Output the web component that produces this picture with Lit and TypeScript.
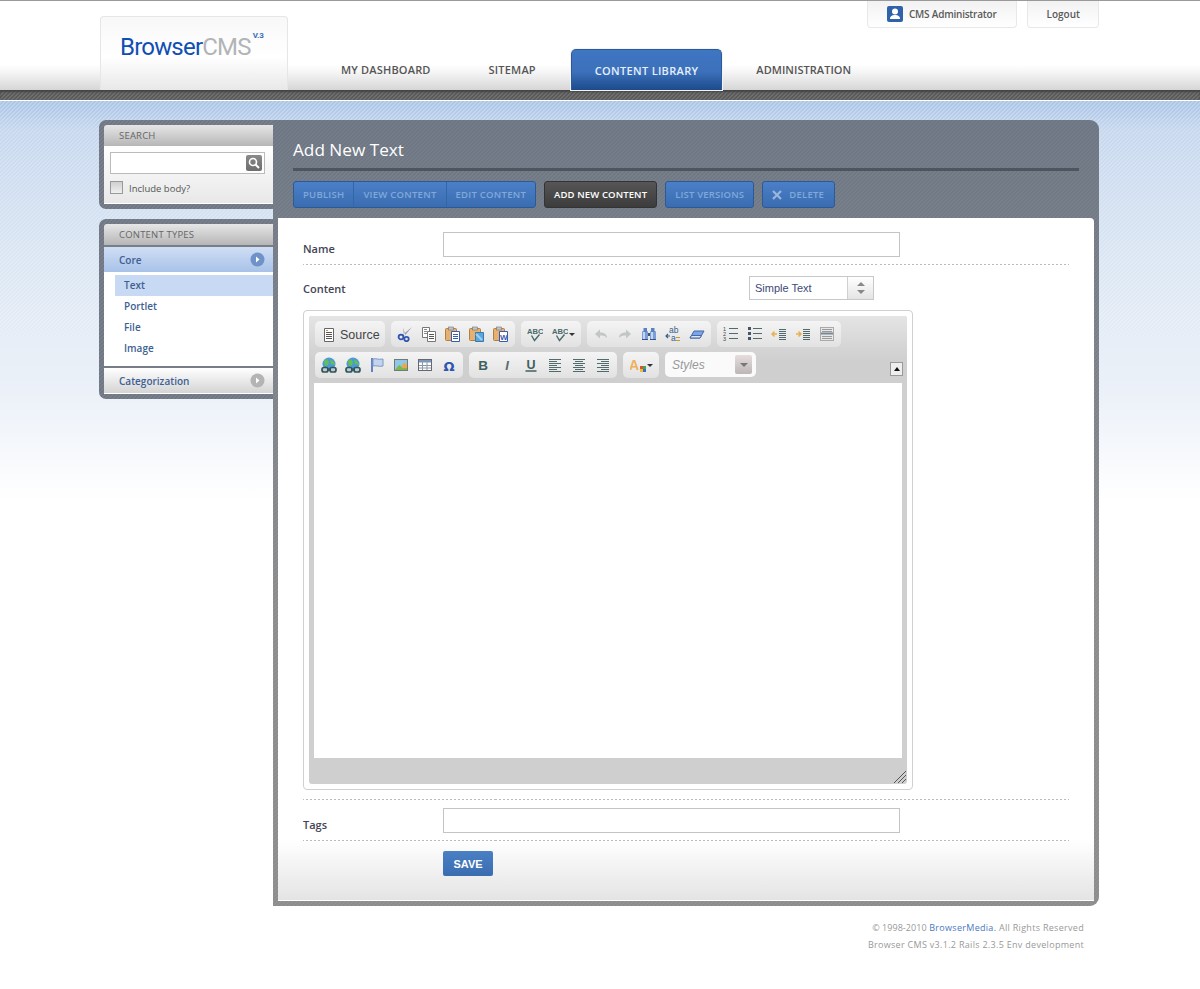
import { LitElement, css, html, svg, nothing } from 'lit'
import { customElement } from 'lit/decorators.js'

const i = (body: unknown) => html`<svg class="ico" viewBox="0 0 16 16" width="16" height="16">${body}</svg>`

const lines = (x1: number, x2: number, ys: number[], c = '#4f6b6b') =>
  ys.map((y) => svg`<path d="M${x1} ${y + 0.5}H${x2}" stroke=${c} fill="none" />`)

const clip = svg`<rect x="0.500" y="2.500" width="11" height="12" rx="1" fill="#e6b070" stroke="#b08040" /><rect x="3.500" y="1" width="5" height="3" fill="#c4c4c4" stroke="#777" stroke-width=".6" />`

const globe = svg`<circle cx="8" cy="7" r="6.500" fill="#4a9ad8" /><path d="M3 4l3-2 2 3-1 3-3 1zM9 2l4 3 1 3-4-1z" fill="#66c050" /><rect x="1" y="10.500" width="6" height="4.500" rx="2" fill="#bcd" stroke="#355" stroke-width="1.700" /><rect x="9" y="10.500" width="6" height="4.500" rx="2" fill="#bcd" stroke="#355" stroke-width="1.700" /><path d="M6 12.700h4" stroke="#355" stroke-width="1.800" />`

const spell = svg`<text x="0" y="8" font-family="Liberation Sans" font-size="7.600" font-weight="700" fill="#486a6a">ABC</text><path d="M4.500 9.500l3 5 5-6" fill="none" stroke="#486a6a" stroke-width="1.400" />`

const icons = {
  source: i(svg`<path d="M3.500 1.500h9v13h-9z" fill="#fff" stroke="#666" /><path d="M5 3.500h2" stroke="#e08a30" />${lines(5, 11, [5, 7, 9, 11], '#555')}`),
  cut: i(svg`<path d="M15 1L6 8.500l1.500 1.500zM6 1.500l2.500 8-1.500.5z" fill="#9aa0a8" /><circle cx="4" cy="11" r="2.400" fill="none" stroke="#2f55b0" stroke-width="1.800" /><circle cx="9.500" cy="13" r="2.200" fill="none" stroke="#2f55b0" stroke-width="1.800" />`),
  copy: i(svg`<path d="M1.500 1.500h7v10h-7z" fill="#fff" stroke="#777" /><path d="M6.500 5.500h8v10h-8z" fill="#fff" stroke="#777" />${lines(3, 6, [3, 5, 7], '#888')}${lines(8, 13, [8, 10, 12], '#555')}`),
  paste: i(svg`${clip}<path d="M6.500 5.500h8v10h-8z" fill="#fff" stroke="#3a5cb0" />${lines(8, 13, [8, 10, 12], '#3a5cb0')}`),
  pasteText: i(svg`${clip}<path d="M6.500 6.500h8v9h-8z" fill="#58a8e0" stroke="#3a78b0" /><path d="M7 8l6 6" stroke="#9fd0f0" stroke-width="2" />`),
  pasteWord: i(svg`${clip}<path d="M6.500 5.500h8v10h-8z" fill="#fff" stroke="#3a5cb0" /><text x="7" y="14" font-family="Liberation Sans" font-size="8" font-weight="700" fill="#3a5cb0">W</text>`),
  spell: i(spell),
  undo: i(svg`<path d="M2 8l5-4.500v3c4 0 7 1.500 7 5.500-1.500-2-4-2.500-7-2.500v3z" fill="#c2c6c6" />`),
  redo: i(svg`<path d="M14 8L9 3.500v3c-4 0-7 1.500-7 5.500 1.500-2 4-2.500 7-2.500v3z" fill="#c2c6c6" />`),
  find: i(svg`<rect x="1" y="5" width="6" height="9" rx="1" fill="#7c9ed8" /><rect x="9" y="5" width="6" height="9" rx="1" fill="#7c9ed8" /><rect x="2.500" y="2" width="3.500" height="4" fill="#5a80c0" /><rect x="10" y="2" width="3.500" height="4" fill="#5a80c0" /><path d="M7 7h2v3H7z" fill="#456" /><path d="M3 6v7M11 6v7" stroke="#e4ecfa" stroke-width="1.400" /><path d="M1 13.500h6M9 13.500h6" stroke="#34558e" />`),
  replace: i(svg`<text x="4" y="7" font-family="Liberation Sans" font-size="8.500" fill="#35608a">ab</text><text x="6" y="15" font-family="Liberation Sans" font-size="8.500" fill="#35608a">a</text><path d="M11 14.500h4M11 11.500h4" stroke="#c89a30" /><path d="M1 10h4M3 8l-2 2 2 2" fill="none" stroke="#35608a" stroke-width="1.200" />`),
  eraser: i(svg`<path d="M1 12l4-7h10l-4 7z" fill="#7ca4e8" stroke="#4468a8" /><path d="M1 12l1.500-2.500h10L11 12z" fill="#dce6f8" stroke="#4468a8" />`),
  ol: i(svg`<text x="0" y="5" font-family="Liberation Sans" font-size="5.500" fill="#444">1</text><text x="0" y="10" font-family="Liberation Sans" font-size="5.500" fill="#444">2</text><text x="0" y="15" font-family="Liberation Sans" font-size="5.500" fill="#444">3</text>${lines(6, 15, [2, 7, 12])}`),
  ul: i(svg`<path d="M1 1h3v3H1zM1 6h3v3H1zM1 11h3v3H1z" fill="#456" />${lines(6, 15, [2, 7, 12])}`),
  outdent: i(svg`<path d="M6 8H1m2.500-2.500L1 8l2.500 2.500" fill="none" stroke="#e8b050" stroke-width="1.500" />${lines(8, 15, [3, 5, 7, 9, 11, 13])}`),
  indent: i(svg`<path d="M1 8h5M3.500 5.500L6 8l-2.500 2.500" fill="none" stroke="#e8b050" stroke-width="1.500" />${lines(8, 15, [3, 5, 7, 9, 11, 13])}`),
  hr: i(svg`<rect x="1.500" y="1.500" width="13" height="13" fill="#e8e8e8" stroke="#aaa" />${lines(3, 13, [3, 5, 10, 12], '#999')}<path d="M2 6.500h12v2H2z" fill="#789" />`),
  link: i(globe),
  unlink: i(globe),
  anchor: i(svg`<path d="M3 1v14" stroke="#4468b8" stroke-width="1.600" /><path d="M4 2c3-1 5 1 10 0v7c-5 1-7-1-10 0z" fill="#c4d4ec" stroke="#7c98c8" />`),
  image: i(svg`<rect x="1.500" y="2.500" width="13" height="11" fill="#8cc8e8" stroke="#777" /><path d="M2 13l4-5 3 2 5-2v5z" fill="#7cb84c" /><path d="M9 8l2.500-2.500L14 8v3H9z" fill="#e8a850" />`),
  table: i(svg`<rect x="1.500" y="2.500" width="13" height="11" fill="#fff" stroke="#667" /><path d="M2 3h12v2.500H2z" fill="#7c98b8" /><path d="M2 8.500h12M2 11h12M5.500 3v10M10 3v10" stroke="#8a98a8" fill="none" />`),
  omega: i(svg`<text x="8" y="13.500" text-anchor="middle" font-family="DejaVu Sans" font-size="13" font-weight="700" fill="#2f55b0">Ω</text>`),
  bold: i(svg`<text x="8" y="13" text-anchor="middle" font-family="Liberation Sans" font-size="13.500" font-weight="700" fill="#3f6060">B</text>`),
  italic: i(svg`<text x="8" y="13" text-anchor="middle" font-family="Liberation Sans" font-size="13" font-style="italic" font-weight="700" fill="#5a6a6a">I</text>`),
  underline: i(svg`<text x="8" y="11.500" text-anchor="middle" font-family="Liberation Sans" font-size="12.500" font-weight="700" fill="#3f6060">U</text><path d="M2.500 14h11" stroke="#3f6060" stroke-width="1.500" />`),
  alignL: i(svg`${lines(2, 14, [2, 6, 10, 14])}${lines(2, 10, [4, 8, 12])}`),
  alignC: i(svg`${lines(2, 14, [2, 6, 10, 14])}${lines(4, 12, [4, 8, 12])}`),
  alignR: i(svg`${lines(2, 14, [2, 6, 10, 14])}${lines(6, 14, [4, 8, 12])}`),
  color: i(svg`<text x="-1" y="13" font-family="Liberation Sans" font-size="14" font-weight="700" fill="#f0b060">A</text><path d="M10 9h3v3h-3z" fill="#e05030" /><path d="M13 9h3v3h-3z" fill="#40a850" /><path d="M10 12h3v3h-3z" fill="#f0c020" /><path d="M13 12h3v3h-3z" fill="#3070d8" />`),
}

type IconName = keyof typeof icons

@customElement('app-root')
export class AppRoot extends LitElement {
  static styles = css`
    :host {
      display: block;
      width: 1200px;
      min-height: 989px;
      font-family: 'Open Sans', sans-serif;
      color: #444;
      background: #fff;
    }
    * {
      box-sizing: border-box;
    }
    .top {
      height: 90px;
      border-top: 1px solid #9a9a9a;
      background: linear-gradient(#fff 0, #fff 64px, #f4f4f4 72px, #d6d6d6 89px);
    }
    .top-in {
      width: 1000px;
      height: 89px;
      margin: 0 auto;
      display: flex;
    }
    .logo {
      width: 188px;
      height: 74px;
      margin-top: 15px;
      padding: 15px 0 0 19px;
      border: 1px solid #e6e6e6;
      border-bottom: 0;
      border-radius: 4px 4px 0 0;
      background: linear-gradient(#f8f8f8, #fff 55%, #e8e8e8);
      display: flex;
      align-items: flex-start;
      font-family: 'Roboto', sans-serif;
      font-size: 24px;
      line-height: 30px;
      letter-spacing: -0.8px;
      color: #0f4fb4;
    }
    .logo span {
      color: #b2b4b6;
    }
    .logo sup {
      font-size: 8px;
      line-height: 10px;
      font-weight: 700;
      letter-spacing: 0;
      color: #3a6cb8;
      margin-left: 2px;
      margin-top: -1px;
    }
    .top-r {
      flex: 1;
      display: flex;
      flex-direction: column;
      justify-content: space-between;
    }
    .util {
      display: flex;
      justify-content: flex-end;
      gap: 10px;
      margin-right: 1px;
    }
    .util div {
      height: 27px;
      padding: 0 18px 0 19px;
      border: 1px solid #e8e8e8;
      border-top: 0;
      border-radius: 0 0 4px 4px;
      background: linear-gradient(#f2f2f2, #fff);
      display: flex;
      align-items: center;
      gap: 6px;
      font-size: 10px;
      font-weight: 600;
      color: #5a5a5a;
    }
    .util .who {
      padding-right: 19px;
      letter-spacing: -0.22px;
    }
    .tabs {
      display: flex;
      gap: 12px;
      margin-left: 30px;
      height: 41px;
    }
    .tab {
      padding: 0 23px;
      display: flex;
      align-items: center;
      font-size: 11px;
      font-weight: 600;
      letter-spacing: 0.18px;
      color: #555;
    }
    .tab.on {
      color: #e6f0fc;
      letter-spacing: 0.32px;
      border-radius: 5px 5px 0 0;
      border: 1px solid #2a5a9c;
      border-bottom: 0;
      background: linear-gradient(#3f76c2, #3c70ba 55%, #2f62a8 72%, #1d4a8c);
      box-shadow: 0 0 0 1px #f4f4f4;
    }
    .tab.last {
      margin-left: -1px;
      letter-spacing: 0.05px;
    }
    .strip {
      height: 10px;
      background: linear-gradient(135deg, #6e6e6e 25%, #5a5a5a 25% 50%, #6e6e6e 50% 75%, #5a5a5a 75%) 0 0 / 4px 4px;
      box-shadow: inset 0 2px 2px #444;
    }
    .sky {
      position: relative;
      border-top: 1px solid #fff;
      background: linear-gradient(#a9c4e6, #c6d7ee 30px, #d9e5f3 150px, #edf2f9 300px, #fff 400px);
      padding: 19px 0 0 99px;
      height: 889px;
    }
    .sky::before {
      content: '';
      position: absolute;
      top: 0;
      left: 0;
      right: 0;
      height: 300px;
      background: linear-gradient(
          135deg,
          rgba(255, 255, 255, 0.22) 25%,
          transparent 25% 50%,
          rgba(255, 255, 255, 0.22) 50% 75%,
          transparent 75%
        )
        0 0 / 4px 4px;
      -webkit-mask-image: linear-gradient(#000 70%, transparent);
      mask-image: linear-gradient(#000 70%, transparent);
    }
    .cols {
      position: relative;
      display: flex;
    }
    .side {
      width: 174px;
    }
    .box {
      padding: 5px 0 5px 5px;
      border-radius: 7px 0 0 7px;
      background: linear-gradient(135deg, #7a808b 25%, #6f7784 25% 50%, #7a808b 50% 75%, #6f7784 75%) 0 0 / 4px 4px;
      margin-bottom: 10px;
    }
    .head {
      height: 21px;
      padding-left: 15px;
      display: flex;
      align-items: center;
      border-radius: 3px 0 0 0;
      background: linear-gradient(#e6e6e6, #b6b6b6);
      font-size: 9.5px;
      letter-spacing: 0.2px;
      color: #666;
    }
    .search {
      height: 58px;
      padding: 6px 8px 0 6px;
      background: linear-gradient(#fff, #e8e8e8);
      border-bottom: 1px solid #fff;
    }
    .sbox {
      height: 22px;
      border: 1px solid #bbb;
      background: #fff;
      display: flex;
      justify-content: flex-end;
      align-items: center;
      padding-right: 2px;
    }
    .sbtn {
      width: 16px;
      height: 16px;
      border-radius: 2px;
      background: linear-gradient(#8a8a8a, #6e6e6e);
      display: block;
    }
    .chk {
      margin-top: 6px;
      display: flex;
      align-items: center;
      gap: 6px;
      font-size: 9.5px;
      color: #555;
    }
    .chk i {
      width: 13px;
      height: 13px;
      border: 1px solid #999;
      background: linear-gradient(#cfcfcf, #f0f0f0);
    }
    .chk span {
      padding-top: 2px;
    }
    .types {
      margin-bottom: 0;
    }
    .types .head {
      height: 23px;
      border-bottom: 2px solid #777e8a;
    }
    .acc {
      height: 25px;
      padding: 0 8px 0 15px;
      display: flex;
      align-items: center;
      justify-content: space-between;
      font-size: 10px;
      font-weight: 600;
      color: #3d5f94;
      background: linear-gradient(#cfdef4, #a8c2e8);
    }
    .acc.closed {
      height: 26px;
      background: linear-gradient(#fff, #d4d4d4);
      border-bottom: 1px solid #fff;
    }
    .items {
      padding: 3px 0 0 11px;
      height: 96px;
      background: #fff;
      border-bottom: 2px solid #777e8a;
      font-size: 10px;
      font-weight: 600;
      color: #3d5f94;
    }
    .items div {
      height: 21px;
      padding: 0 0 2px 9px;
      display: flex;
      align-items: center;
    }
    .items .on {
      background: #c8daf3;
    }
    .main {
      width: 826px;
      height: 786px;
      padding: 0 5px 5px;
      border-radius: 0 9px 9px 0;
      background:
        linear-gradient(
            135deg,
            rgba(255, 255, 255, 0.05) 25%,
            transparent 25% 50%,
            rgba(255, 255, 255, 0.05) 50% 75%,
            transparent 75%
          )
          0 0 / 4px 4px,
        linear-gradient(#6c7582 0, #747b87 120px, #8c8c8c 500px, #8c8c8c);
    }
    .pane-head {
      height: 98px;
      padding: 0 15px;
    }
    h1 {
      margin: 0;
      height: 51px;
      padding-top: 17px;
      border-bottom: 3px solid #4e555e;
      font-size: 17.2px;
      line-height: 25px;
      font-weight: 400;
      color: #fff;
    }
    .btns {
      margin-top: 10px;
      display: flex;
      gap: 8px;
    }
    .bgroup {
      display: flex;
      height: 27px;
      border: 1px solid #2d5a96;
      border-radius: 3px;
      background: linear-gradient(#4a80c8, #3a6cb0);
    }
    .bgroup span {
      padding: 0 9px;
      display: flex;
      align-items: center;
      gap: 7px;
      font-size: 9.5px;
      font-weight: 600;
      letter-spacing: 0.26px;
      color: #80a8da;
      border-left: 1px solid #3266a8;
    }
    .bgroup span:first-child {
      border-left: 0;
    }
    .bgroup span.list {
      letter-spacing: 0.18px;
    }
    .bgroup span.del {
      padding-right: 10px;
    }
    .bgroup.dark {
      border-color: #333;
      background: linear-gradient(#565656, #3c3c3c);
    }
    .bgroup.dark span {
      color: #fff;
      letter-spacing: 0.12px;
    }
    .card {
      height: 683px;
      padding: 14px 25px 0;
      border-radius: 0 4px 0 0;
      background: linear-gradient(#fff 0, #fff 622px, #e4e4e4);
      border-bottom: 1px solid #fff;
    }
    .row {
      display: flex;
      align-items: center;
      font-size: 11px;
      font-weight: 600;
      color: #445;
    }
    .row label {
      width: 140px;
    }
    .dash {
      border-style: solid;
      border-width: 0 0 1px;
      border-image: repeating-linear-gradient(90deg, #bbb 0 2px, transparent 2px 4px) 1;
    }
    .name {
      height: 33px;
      align-items: flex-start;
    }
    .name label {
      padding-top: 9px;
    }
    .input {
      width: 457px;
      height: 25px;
      border: 1px solid #c4c4c4;
      background: #fff;
    }
    .ctype {
      height: 45px;
      justify-content: space-between;
      width: 571px;
    }
    .ctype label {
      padding-top: 1px;
    }
    .select {
      width: 125px;
      height: 24px;
      border: 1px solid #c8c8c8;
      display: flex;
      align-items: center;
      justify-content: space-between;
      padding-left: 5px;
      font-family: 'Liberation Sans', sans-serif;
      font-size: 11px;
      font-weight: 400;
      color: #3c4a78;
    }
    .select b {
      width: 26px;
      height: 22px;
      border-left: 1px solid #d0d0d0;
      background: linear-gradient(#fff, #e4e4e4);
      display: flex;
      align-items: center;
      justify-content: center;
    }
    .editor {
      width: 610px;
      height: 480px;
      padding: 5px;
      border: 1px solid #d0d0d0;
      border-radius: 4px;
      background: #fff;
    }
    .ed-in {
      height: 468px;
      border-radius: 3px;
      background: #cfcfcf;
      display: flex;
      flex-direction: column;
    }
    .bars {
      height: 67px;
      padding: 5px 4px 0 6px;
      border-radius: 3px 3px 0 0;
      background: linear-gradient(#e4e4e4, #cfcfcf 45px);
      display: flex;
      flex-direction: column;
      gap: 5px;
    }
    .bar {
      display: flex;
      gap: 6px;
      height: 26px;
    }
    .grp {
      display: flex;
      align-items: center;
      padding: 0 2px;
      border-radius: 5px;
      background: linear-gradient(#f4f4f4, #e2e2e2);
    }
    .tool {
      width: 24px;
      height: 26px;
      display: flex;
      align-items: center;
      justify-content: center;
      gap: 1px;
    }
    .tool.wide {
      width: 32px;
    }
    .tool .caret {
      width: 0;
      height: 0;
      border: 3px solid transparent;
      border-top: 3px solid #333;
      border-bottom: 0;
    }
    .ico {
      display: block;
      flex: none;
    }
    .src {
      width: 70px;
      padding: 1px 0 0 6px;
      gap: 3px;
      font-family: 'Liberation Sans', sans-serif;
      font-size: 12.5px;
      color: #444;
    }
    .styles {
      width: 91px;
      height: 25px;
      padding: 0 4px 0 7px;
      justify-content: space-between;
      background: #fafafa;
      font-family: 'Liberation Sans', sans-serif;
      font-size: 12px;
      font-style: italic;
      color: #999;
    }
    .styles b {
      width: 17px;
      height: 19px;
      border-radius: 2px;
      background: linear-gradient(#e6dede, #bdb6b6);
      display: flex;
      align-items: center;
      justify-content: center;
    }
    .styles b::after {
      content: '';
      border: 4px solid transparent;
      border-top: 4px solid #777;
      border-bottom: 0;
    }
    .collapse {
      margin: 10px 0 0 auto;
      width: 13px;
      height: 14px;
      border: 1px solid #999;
      background: #eee;
      display: flex;
      align-items: center;
      justify-content: center;
    }
    .collapse::after {
      content: '';
      border: 3px solid transparent;
      border-bottom: 4px solid #111;
      border-top: 0;
    }
    .area {
      height: 375px;
      margin: 0 5px;
      background: #fff;
    }
    .grip {
      flex: 1;
      display: flex;
      justify-content: flex-end;
      align-items: flex-end;
    }
    .tags {
      height: 42px;
      margin-top: 9px;
      border-width: 1px 0;
      padding-top: 8px;
      align-items: flex-start;
    }
    .tags label {
      padding-top: 9px;
    }
    .save {
      margin: 10px 0 0 140px;
      width: 50px;
      height: 25px;
      border-radius: 2px;
      background: linear-gradient(#4a80c4, #3a6cb0);
      display: flex;
      align-items: center;
      justify-content: center;
      font-family: 'Liberation Sans', sans-serif;
      font-size: 11px;
      font-weight: 700;
      color: #fff;
    }
    .foot {
      width: 1000px;
      padding: 13px 15px 0 0;
      text-align: right;
      font-size: 9px;
      line-height: 17px;
      letter-spacing: 0.3px;
      color: #999;
    }
    .foot a {
      color: #4a78c0;
    }
    .foot span {
      letter-spacing: 0.05px;
    }
  `

  private tool(name: IconName, caret = false) {
    return html`<div class="tool ${caret ? 'wide' : ''}">${icons[name]}${caret ? html`<span class="caret"></span>` : nothing}</div>`
  }

  private group(names: IconName[]) {
    return html`<div class="grp">${names.map((n) => this.tool(n))}</div>`
  }

  render() {
    return html`
      <div class="top">
        <div class="top-in">
          <div class="logo">Browser<span>CMS</span><sup>V.3</sup></div>
          <div class="top-r">
            <div class="util">
              <div class="who">
                <svg width="16" height="16" viewBox="0 0 16 16">
                  <rect width="16" height="16" rx="2" fill="#2f62a8" />
                  <circle cx="8" cy="5.500" r="3" fill="#fff" />
                  <path d="M3 13c0-3 2-4 5-4s5 1 5 4z" fill="#fff" />
                </svg>
                CMS Administrator
              </div>
              <div>Logout</div>
            </div>
            <div class="tabs">
              <div class="tab">MY DASHBOARD</div>
              <div class="tab">SITEMAP</div>
              <div class="tab on">CONTENT LIBRARY</div>
              <div class="tab last">ADMINISTRATION</div>
            </div>
          </div>
        </div>
      </div>
      <div class="strip"></div>
      <div class="sky">
        <div class="cols">
          <div class="side">
            <div class="box">
              <div class="head">SEARCH</div>
              <div class="search">
                <div class="sbox">
                  <svg class="sbtn" viewBox="0 0 16 16">
                    <circle cx="7" cy="7" r="3.500" fill="none" stroke="#fff" stroke-width="1.600" />
                    <path d="M9.500 9.500L13 13" stroke="#fff" stroke-width="2" />
                  </svg>
                </div>
                <div class="chk"><i></i><span>Include body?</span></div>
              </div>
            </div>
            <div class="box types">
              <div class="head">CONTENT TYPES</div>
              <div class="acc">Core ${this.arrow('#6f93c8')}</div>
              <div class="items">
                <div class="on">Text</div>
                <div>Portlet</div>
                <div>File</div>
                <div>Image</div>
              </div>
              <div class="acc closed">Categorization ${this.arrow('#b4b4b4')}</div>
            </div>
          </div>
          <div class="main">
            <div class="pane-head">
              <h1>Add New Text</h1>
              <div class="btns">
                <div class="bgroup"><span>PUBLISH</span><span>VIEW CONTENT</span><span>EDIT CONTENT</span></div>
                <div class="bgroup dark"><span>ADD NEW CONTENT</span></div>
                <div class="bgroup"><span class="list">LIST VERSIONS</span></div>
                <div class="bgroup">
                  <span class="del">
                    <svg width="10" height="10" viewBox="0 0 10 10"><path d="M1 1l8 8M9 1L1 9" stroke="#9ab6dc" stroke-width="2.200" /></svg>
                    DELETE
                  </span>
                </div>
              </div>
            </div>
            <div class="card">
              <div class="row name dash"><label>Name</label><div class="input"></div></div>
              <div class="row ctype">
                <label>Content</label>
                <div class="select">
                  Simple Text
                  <b>
                    <svg width="10" height="14" viewBox="0 0 10 14"><path d="M5 1l4 4H1zM5 13l4-4H1z" fill="#888" /></svg>
                  </b>
                </div>
              </div>
              ${this.editor()}
              <div class="row dash tags"><label>Tags</label><div class="input"></div></div>
              <div class="save">SAVE</div>
            </div>
          </div>
        </div>
        <div class="foot">
          <span>© 1998-2010</span> <a>BrowserMedia.</a> All Rights Reserved<br />
          Browser CMS v3.1.2 Rails 2.3.5 Env development
        </div>
      </div>
    `
  }

  private arrow(fill: string) {
    return html`<svg width="15" height="15" viewBox="0 0 15 15">
      <circle cx="7.500" cy="7.500" r="7" fill=${fill} />
      <path d="M6 4.500l3.500 3-3.500 3z" fill="#fff" />
    </svg>`
  }

  private editor() {
    return html`
      <div class="editor">
        <div class="ed-in">
          <div class="bars">
            <div class="bar">
              <div class="grp src">${icons.source} Source</div>
              ${this.group(['cut', 'copy', 'paste', 'pasteText', 'pasteWord'])}
              <div class="grp">${this.tool('spell')}${this.tool('spell', true)}</div>
              ${this.group(['undo', 'redo', 'find', 'replace', 'eraser'])}
              ${this.group(['ol', 'ul', 'outdent', 'indent', 'hr'])}
            </div>
            <div class="bar">
              ${this.group(['link', 'unlink', 'anchor', 'image', 'table', 'omega'])}
              ${this.group(['bold', 'italic', 'underline', 'alignL', 'alignC', 'alignR'])}
              <div class="grp">${this.tool('color', true)}</div>
              <div class="grp styles">Styles <b></b></div>
              <div class="collapse"></div>
            </div>
          </div>
          <div class="area"></div>
          <div class="grip">
            <svg width="14" height="14" viewBox="0 0 14 14">
              <path d="M1 13L13 1M5 13l8-8M9 13l4-4" stroke="#555" fill="none" />
            </svg>
          </div>
        </div>
      </div>
    `
  }
}
